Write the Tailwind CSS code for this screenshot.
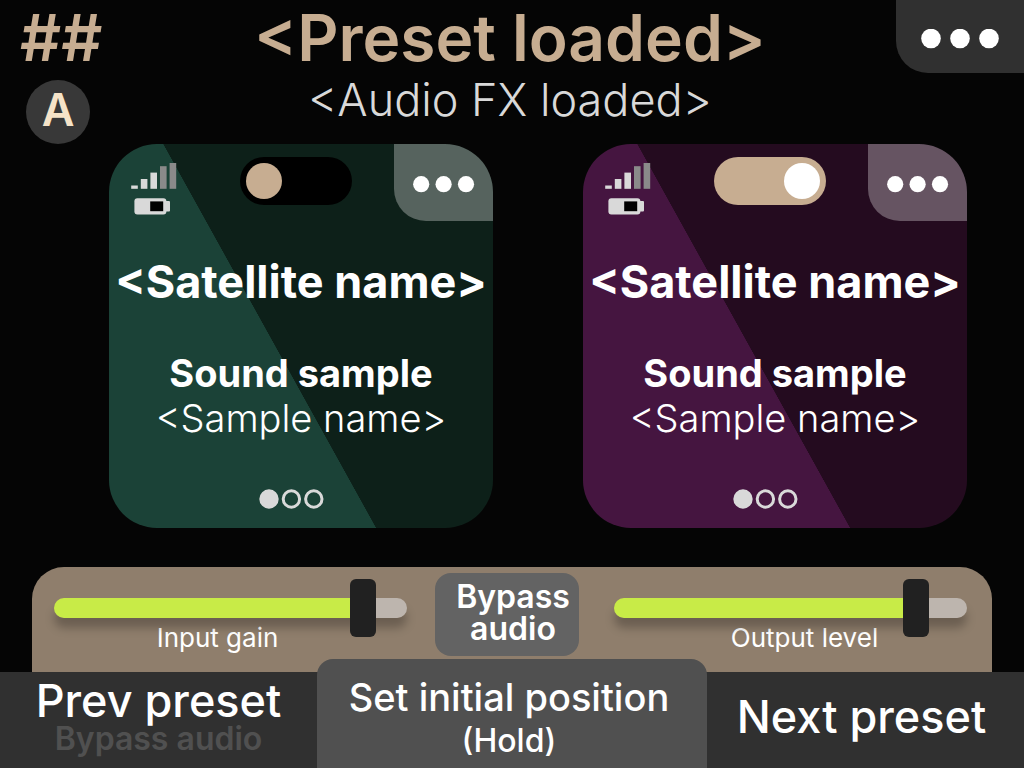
<!DOCTYPE html>
<html lang="en">
<head>
    <meta charset="UTF-8">
    <meta name="viewport" content="width=device-width, initial-scale=1.0">
    <script src="https://cdn.jsdelivr.net/npm/@tailwindcss/browser@4"></script>
    <title>Presets</title>
</head>
<body class="flex min-h-screen flex-col bg-[#050505] font-['Inter',sans-serif] text-white">

    <!-- Header: preset number, preset name and main menu -->
    <header class="flex items-start justify-between">
        <div class="w-32 shrink-0 pl-5">
            <p class="text-[64px] leading-[75px] font-semibold text-[#c7ad91]">##</p>
            <p class="mt-[5px] ml-1.5 flex size-16 items-center justify-center rounded-full bg-[#383838] pb-1.5 text-[45px] leading-none font-semibold text-[#f5e3c8]">A</p>
        </div>
        <div class="pr-1 text-center whitespace-nowrap">
            <h1 class="text-[64px] leading-[75px] font-semibold text-[#c7ad91]">&lt;Preset loaded&gt;</h1>
            <p class="text-[45px] leading-[50px] font-light text-[#d9d9d9]">&lt;Audio FX loaded&gt;</p>
        </div>
        <button type="button" aria-label="Main menu" class="flex h-[73px] w-32 shrink-0 items-center justify-center rounded-bl-[32px] bg-[#303030] pt-1">
            <svg class="h-5 w-[78px]" viewBox="0 0 78 20" fill="currentColor">
                <circle cx="10" cy="9.5" r="9.8"/><circle cx="39" cy="9.5" r="9.8"/><circle cx="68" cy="9.5" r="9.8"/>
            </svg>
        </button>
    </header>

    <!-- Satellites -->
    <main class="grid grid-cols-2 gap-[90px] pr-[57px] pl-[109px]">
        <section class="flex aspect-square flex-col overflow-hidden rounded-[48px] bg-[linear-gradient(61deg,#1b4237_44.7%,#0d2019_44.8%)]">
            <div class="flex items-start">
                <!-- Signal and battery -->
                <svg class="mt-[19px] ml-[22px] h-[52px] w-[46px] shrink-0" viewBox="0 0 46 52">
                    <g fill="#d9d9d9">
                        <rect x="0.2" y="22.5" width="6.6" height="3.3"/>
                        <rect x="9.8" y="16" width="6.6" height="9.8"/>
                        <rect x="19.4" y="9.6" width="6.6" height="16.2"/>
                    </g>
                    <g fill="#8a8a8a">
                        <rect x="29" y="3.2" width="6.6" height="22.6"/>
                        <rect x="38.6" y="0" width="6.6" height="25.8"/>
                    </g>
                    <rect x="3.4" y="35.2" width="32" height="16.3" rx="3" fill="#d9d9d9"/>
                    <rect x="34" y="38" width="5" height="10.5" rx="1" fill="#d9d9d9"/>
                    <rect x="19.2" y="38.4" width="13" height="9.8" fill="#000"/>
                </svg>
                <input type="checkbox" aria-label="Green satellite on" class="mt-[13px] ml-[63px] h-12 w-28 shrink-0 appearance-none rounded-full bg-black p-1.5 before:block before:size-9 before:rounded-full before:bg-[#c7ad91] checked:bg-[#c7ad91] checked:before:ml-auto checked:before:bg-white">
                <button type="button" aria-label="Green satellite menu" class="ml-auto flex h-[77px] w-[99px] shrink-0 items-center justify-center rounded-bl-[32px] bg-white/30 pt-1">
                    <svg class="h-[17px] w-[62px]" viewBox="0 0 62 17" fill="currentColor">
                        <circle cx="8.2" cy="8.2" r="8.1"/><circle cx="30.6" cy="8.2" r="8.1"/><circle cx="53" cy="8.2" r="8.1"/>
                    </svg>
                </button>
            </div>
            <h2 class="mt-[33px] text-center text-[45px] leading-[56px] font-bold whitespace-nowrap">&lt;Satellite name&gt;</h2>
            <h3 class="mt-[41px] text-center text-[38px] leading-[45px] font-bold">Sound sample</h3>
            <p class="text-center text-[38px] leading-[45px] font-light">&lt;Sample name&gt;</p>
            <!-- Page dots -->
            <svg class="mx-auto mt-auto mb-[19px] box-content h-5 w-[65px] pr-5" viewBox="0 0 65 20" fill="none" stroke="#d9d9d9" stroke-width="3">
                <circle cx="10" cy="10" r="8.2" fill="#d9d9d9"/><circle cx="32.4" cy="10" r="8.2"/><circle cx="54.8" cy="10" r="8.2"/>
            </svg>
        </section>

        <section class="flex aspect-square flex-col overflow-hidden rounded-[48px] bg-[linear-gradient(61deg,#451540_44.7%,#240b1f_44.8%)]">
            <div class="flex items-start">
                <!-- Signal and battery -->
                <svg class="mt-[19px] ml-[22px] h-[52px] w-[46px] shrink-0" viewBox="0 0 46 52">
                    <g fill="#d9d9d9">
                        <rect x="0.2" y="22.5" width="6.6" height="3.3"/>
                        <rect x="9.8" y="16" width="6.6" height="9.8"/>
                        <rect x="19.4" y="9.6" width="6.6" height="16.2"/>
                    </g>
                    <g fill="#8a8a8a">
                        <rect x="29" y="3.2" width="6.6" height="22.6"/>
                        <rect x="38.6" y="0" width="6.6" height="25.8"/>
                    </g>
                    <rect x="3.4" y="35.2" width="32" height="16.3" rx="3" fill="#d9d9d9"/>
                    <rect x="34" y="38" width="5" height="10.5" rx="1" fill="#d9d9d9"/>
                    <rect x="19.2" y="38.4" width="13" height="9.8" fill="#000"/>
                </svg>
                <input type="checkbox" checked aria-label="Purple satellite on" class="mt-[13px] ml-[63px] h-12 w-28 shrink-0 appearance-none rounded-full bg-black p-1.5 before:block before:size-9 before:rounded-full before:bg-[#c7ad91] checked:bg-[#c7ad91] checked:before:ml-auto checked:before:bg-white">
                <button type="button" aria-label="Purple satellite menu" class="ml-auto flex h-[77px] w-[99px] shrink-0 items-center justify-center rounded-bl-[32px] bg-white/30 pt-1">
                    <svg class="h-[17px] w-[62px]" viewBox="0 0 62 17" fill="currentColor">
                        <circle cx="8.2" cy="8.2" r="8.1"/><circle cx="30.6" cy="8.2" r="8.1"/><circle cx="53" cy="8.2" r="8.1"/>
                    </svg>
                </button>
            </div>
            <h2 class="mt-[33px] text-center text-[45px] leading-[56px] font-bold whitespace-nowrap">&lt;Satellite name&gt;</h2>
            <h3 class="mt-[41px] text-center text-[38px] leading-[45px] font-bold">Sound sample</h3>
            <p class="text-center text-[38px] leading-[45px] font-light">&lt;Sample name&gt;</p>
            <!-- Page dots -->
            <svg class="mx-auto mt-auto mb-[19px] box-content h-5 w-[65px] pr-5" viewBox="0 0 65 20" fill="none" stroke="#d9d9d9" stroke-width="3">
                <circle cx="10" cy="10" r="8.2" fill="#d9d9d9"/><circle cx="32.4" cy="10" r="8.2"/><circle cx="54.8" cy="10" r="8.2"/>
            </svg>
        </section>
    </main>

    <!-- Levels -->
    <section class="mx-8 mt-auto flex h-[105px] items-start rounded-t-[32px] bg-[#8f7e6c] pt-1.5 pr-[25px] pl-[22px]">
        <div class="flex flex-1 flex-col">
            <input id="gain" type="range" min="0" max="200" value="181" class="relative mt-[25px] h-5 w-full appearance-none rounded-full bg-[linear-gradient(to_right,#c8eb47_87%,#bdb5ae_87%)] shadow-[0_10px_10px_rgba(0,0,0,0.25)] [&::-webkit-slider-thumb]:h-[58px] [&::-webkit-slider-thumb]:w-[26px] [&::-webkit-slider-thumb]:appearance-none [&::-webkit-slider-thumb]:rounded-md [&::-webkit-slider-thumb]:bg-[#212121]">
            <label for="gain" class="mt-1 pr-[26px] text-center text-[26px] leading-8">Input gain</label>
        </div>
        <button type="button" class="mr-[35px] ml-7 h-[83px] w-36 rounded-2xl bg-[#636363] pb-1 pl-3 text-[32px] leading-8 font-semibold">Bypass audio</button>
        <div class="flex flex-1 flex-col">
            <input id="output" type="range" min="0" max="200" value="177" class="relative mt-[25px] h-5 w-full appearance-none rounded-full bg-[linear-gradient(to_right,#c8eb47_86%,#bdb5ae_86%)] shadow-[0_10px_10px_rgba(0,0,0,0.25)] [&::-webkit-slider-thumb]:h-[58px] [&::-webkit-slider-thumb]:w-[26px] [&::-webkit-slider-thumb]:appearance-none [&::-webkit-slider-thumb]:rounded-md [&::-webkit-slider-thumb]:bg-[#212121]">
            <label for="output" class="mt-1 pl-[28px] text-center text-[26px] leading-8">Output level</label>
        </div>
    </section>

    <!-- Footswitches -->
    <footer class="grid h-24 grid-cols-[1fr_390px_1fr] bg-[#303030] whitespace-nowrap">
        <button type="button" class="flex flex-col items-center pt-[7px]">
            <span class="text-[45px] leading-[44px] font-medium">Prev preset</span>
            <span class="text-[32px] leading-8 font-semibold text-[#505050]">Bypass audio</span>
        </button>
        <button type="button" class="-mt-[13px] flex flex-col items-center rounded-t-2xl bg-[#505050] pt-4 pr-1.5">
            <span class="text-[38px] leading-[44px] font-medium">Set initial position</span>
            <span class="text-[32px] leading-[44px] font-medium">(Hold)</span>
        </button>
        <button type="button" class="pr-2 pb-1.5 text-[45px] font-medium">Next preset</button>
    </footer>

</body>
</html>
